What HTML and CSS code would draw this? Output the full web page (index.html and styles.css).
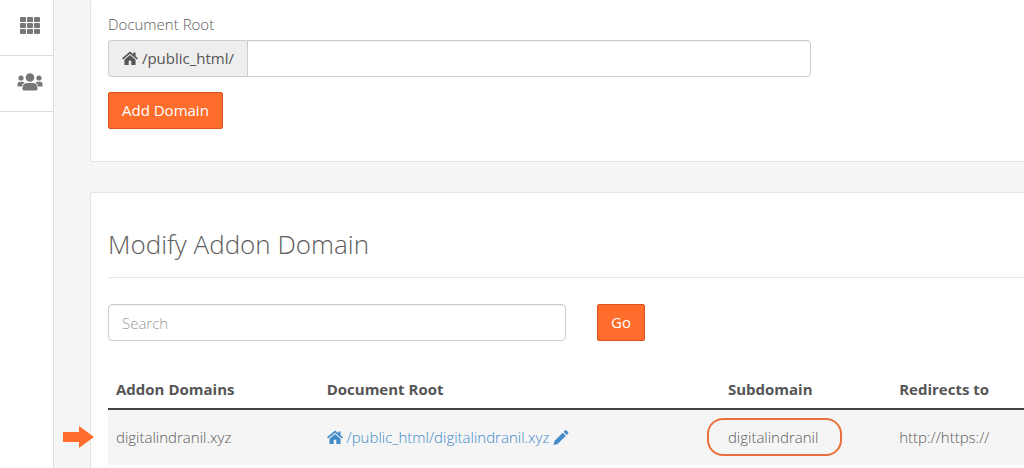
FILE: index.html
```html
<!DOCTYPE html>
<html lang="en">
<head>
	<meta charset="utf-8">
	<meta name="viewport" content="width=device-width, initial-scale=1">
	<title>Addon Domains</title>
	<link rel="stylesheet" href="styles.css">
</head>

<body>
	<svg class="sprite" aria-hidden="true">
		<symbol id="home" viewBox="0 0 17 15">
			<path d="M8.500 0L0 7.300l1.200 1.300L8.500 2.400l7.300 6.200L17 7.300l-2.600-2.200V1h-2.400v2z"/>
			<path d="M8.500 3.800L2.600 8.800V14.500h4.500V10h2.800v4.500h4.500V8.800z"/>
		</symbol>
		<symbol id="pencil" viewBox="0 0 16 16">
			<path d="M0 16l1.200-4.500 8.700-8.700 3.300 3.300-8.700 8.700zM10.800 1.900l1.400-1.400q.8-.8 1.600 0l1.700 1.700q.8.800 0 1.600l-1.400 1.400z"/>
		</symbol>
	</svg>

	<div class="layout">
		<nav class="sidebar">
			<a href="#" aria-label="Home">
				<svg width="20" height="17" viewBox="0 0 20 17">
					<rect x="0" y="0" width="6" height="5" rx="1"/>
					<rect x="7" y="0" width="6" height="5" rx="1"/>
					<rect x="14" y="0" width="6" height="5" rx="1"/>
					<rect x="0" y="6" width="6" height="5" rx="1"/>
					<rect x="7" y="6" width="6" height="5" rx="1"/>
					<rect x="14" y="6" width="6" height="5" rx="1"/>
					<rect x="0" y="12" width="6" height="5" rx="1"/>
					<rect x="7" y="12" width="6" height="5" rx="1"/>
					<rect x="14" y="12" width="6" height="5" rx="1"/>
				</svg>
			</a>
			<a href="#" aria-label="Users">
				<svg width="26" height="18" viewBox="0 0 26 18">
					<circle cx="13" cy="4.500" r="4.300"/>
					<circle cx="4" cy="5" r="2.600"/>
					<circle cx="22" cy="5" r="2.600"/>
					<path d="M5.500 16V15q0-5 5-5h5q5 0 5 5v1q0 1.500-1.500 1.500H7q-1.500 0-1.500-1.500z"/>
					<path d="M.5 13.500v-2Q.5 8.700 3 8.700h2.500q1.500 0 2 .9Q5.300 11 4.800 13.500z"/>
					<path d="M25.500 13.500v-2q0-2.800-2.500-2.800h-2.500q-1.500 0-2 .9 2.200 1.400 2.700 3.900z"/>
				</svg>
			</a>
		</nav>

		<main class="content">
			<section class="panel">
				<form class="add-form">
					<label for="docroot">Document Root</label>
					<div class="input-group">
						<span class="addon"><svg class="icon"><use href="#home"/></svg> /public_html/</span>
						<input id="docroot" class="input" type="text">
					</div>
					<button class="btn" type="button">Add Domain</button>
				</form>
			</section>

			<section class="panel">
				<h2>Modify Addon Domain</h2>
				<form class="search-form">
					<input class="input" type="text" placeholder="Search" aria-label="Search">
					<button class="btn" type="button">Go</button>
				</form>
				<table>
					<thead>
						<tr>
							<th class="col-domain">Addon Domains</th>
							<th class="col-root">Document Root</th>
							<th class="col-sub">Subdomain</th>
							<th>Redirects to</th>
						</tr>
					</thead>
					<tbody>
						<tr>
							<td class="marked">
								<svg class="arrow" width="31" height="22" viewBox="0 0 31 22"><path d="M0 6h16V0l15 11-15 11v-6H0z"/></svg>
								digitalindranil.xyz
							</td>
							<td><a href="#"><svg class="icon"><use href="#home"/></svg> /public_html/digitalindranil.xyz <svg class="icon"><use href="#pencil"/></svg></a></td>
							<td><span class="circled">digitalindranil</span></td>
							<td>http://https://</td>
						</tr>
					</tbody>
				</table>
			</section>
		</main>
	</div>
</body>
</html>
```

FILE: styles.css
```css
* {
	box-sizing: border-box;
}
body {
	margin: 0;
	font-family: "Open Sans", sans-serif;
	font-weight: 300;
	font-size: 15px;
	line-height: 21px;
	color: #5c5c5c;
	background: #f5f5f5;
}
.sprite {
	display: none;
}
.layout {
	display: flex;
	height: 100vh;
	overflow: hidden;
}

/* left icon bar */
.sidebar {
	flex: 0 0 54px;
	background: #fff;
	border-right: 1px solid #ddd;
}
.sidebar a {
	display: flex;
	align-items: center;
	justify-content: center;
	height: 56px;
	padding-left: 6px;
	padding-bottom: 4px;
	border-bottom: 1px solid #ddd;
}
.sidebar svg {
	fill: #777;
}

.content {
	flex: 1;
	min-width: 0;
	padding-left: 36px;
}
.panel {
	padding: 35px 0 20px 17px;
	background: #fff;
	border: 1px solid #e3e3e3;
	border-right: none;
	border-radius: 3px 0 0 3px;
}
.panel:first-child {
	margin-bottom: 30px;
	padding-top: 14px;
	padding-bottom: 32px;
	border-top: none;
}
h2 {
	margin: 0 0 26px;
	padding-bottom: 17px;
	border-bottom: 1px solid #e5e5e5;
	font-weight: 300;
	font-size: 26px;
	line-height: 32px;
}

/* forms */
.input {
	flex: 1;
	min-width: 0;
	height: 37px;
	padding: 6px 13px;
	border: 1px solid #ccc;
	border-radius: 4px;
	font: inherit;
	color: #555;
	background: #fff;
	box-shadow: inset 0 1px 1px rgba(0,0,0,0.06);
}
.input::placeholder {
	color: #999;
}
.btn {
	height: 37px;
	padding: 0 13px;
	border: 1px solid #d9541e;
	border-radius: 2px;
	font: inherit;
	font-weight: 400;
	color: #fff;
	background: #ff6c2c;
}
.add-form label {
	display: block;
	margin-bottom: 5px;
}
.input-group {
	display: flex;
	max-width: 703px;
	margin-bottom: 15px;
}
.addon {
	padding: 7px 13px;
	border: 1px solid #ccc;
	border-right: none;
	border-radius: 4px 0 0 4px;
	font-weight: 400;
	color: #555;
	background: #eee;
}
.input-group .input {
	border-radius: 0 4px 4px 0;
}
.search-form {
	display: flex;
	gap: 31px;
	margin-bottom: 30px;
}
.search-form .input {
	flex: 0 0 50%;
}
.icon {
	width: 16px;
	height: 15px;
	vertical-align: -2px;
	fill: currentColor;
}

/* domain list */
table {
	width: 100%;
	table-layout: fixed;
	border-collapse: collapse;
}
th,
td {
	padding: 8px;
	text-align: left;
	white-space: nowrap;
}
th {
	font-weight: 700;
	color: #555;
	border-bottom: 2px solid #444;
}
td {
	padding: 17px 8px;
	background: #f5f5f5;
}
td a {
	color: #428bca;
	text-decoration: none;
}
.col-domain {
	width: 23%;
}
.col-root {
	width: 43.8%;
}
.col-sub {
	width: 18.7%;
}
.marked,
.circled {
	position: relative;
}
.arrow {
	position: absolute;
	left: -45px;
	top: 16px;
	fill: #ff6c2c;
}
.circled::after {
	content: "";
	position: absolute;
	inset: -9px -24px -9px -21px;
	border: 2px solid #e8703a;
	border-radius: 16px;
}
```
